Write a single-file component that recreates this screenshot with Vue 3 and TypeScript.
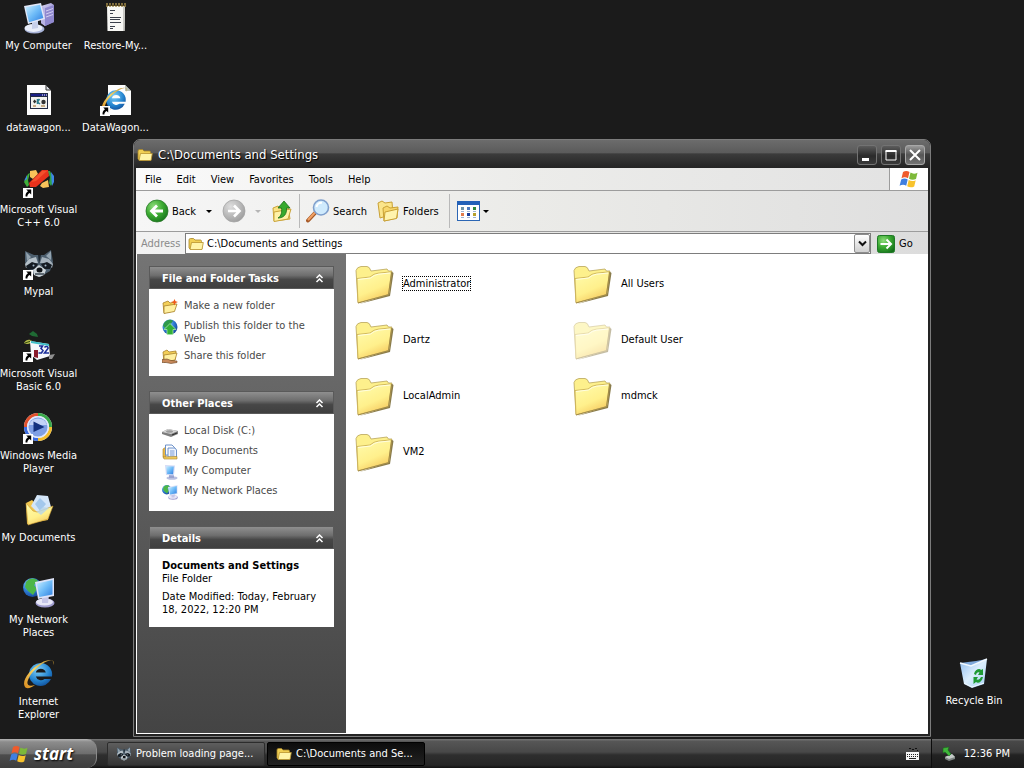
<script setup lang="ts">
import { ref } from 'vue'

interface DesktopItem {
  icon: string
  lines: string[]
  shortcut?: boolean
}

interface TaskLink {
  icon: string
  lines: string[]
}

interface FolderItem {
  name: string
  hidden?: boolean
  focused?: boolean
}

const desktopItems: DesktopItem[] = [
  { icon: 'computer', lines: ['My Computer'] },
  { icon: 'batch', lines: ['datawagon...'] },
  { icon: 'visualc', lines: ['Microsoft Visual', 'C++ 6.0'], shortcut: true },
  { icon: 'raccoon', lines: ['Mypal'], shortcut: true },
  { icon: 'visualbasic', lines: ['Microsoft Visual', 'Basic 6.0'], shortcut: true },
  { icon: 'mediaplayer', lines: ['Windows Media', 'Player'], shortcut: true },
  { icon: 'documents', lines: ['My Documents'] },
  { icon: 'network', lines: ['My Network', 'Places'] },
  { icon: 'explorer', lines: ['Internet', 'Explorer'] },
  { icon: 'notepad', lines: ['Restore-My...'] },
  { icon: 'iepage', lines: ['DataWagon...'], shortcut: true },
]

const menus: string[] = ['File', 'Edit', 'View', 'Favorites', 'Tools', 'Help']

const panels: { title: string; links: TaskLink[] }[] = [
  {
    title: 'File and Folder Tasks',
    links: [
      { icon: 'newfolder', lines: ['Make a new folder'] },
      { icon: 'publish', lines: ['Publish this folder to the', 'Web'] },
      { icon: 'share', lines: ['Share this folder'] },
    ],
  },
  {
    title: 'Other Places',
    links: [
      { icon: 'disk', lines: ['Local Disk (C:)'] },
      { icon: 'docs', lines: ['My Documents'] },
      { icon: 'pc', lines: ['My Computer'] },
      { icon: 'network', lines: ['My Network Places'] },
    ],
  },
]

const folders: FolderItem[] = [
  { name: 'Administrator', focused: true },
  { name: 'All Users' },
  { name: 'Dartz' },
  { name: 'Default User', hidden: true },
  { name: 'LocalAdmin' },
  { name: 'mdmck' },
  { name: 'VM2' },
]

const path = ref('C:\\Documents and Settings')
</script>

<template>
  <div class="desktop">
    <svg class="sprite" aria-hidden="true">
      <defs>
        <linearGradient id="gFolder" x1="0" y1="0" x2="0.5" y2="1">
          <stop offset="0" stop-color="#fffcae" />
          <stop offset="0.65" stop-color="#fff08c" />
          <stop offset="1" stop-color="#f6cc62" />
        </linearGradient>
        <linearGradient id="gScreen" x1="0" y1="0" x2="1" y2="1">
          <stop offset="0" stop-color="#cdf0ff" />
          <stop offset="0.5" stop-color="#6fbcf8" />
          <stop offset="1" stop-color="#2f7fe0" />
        </linearGradient>
        <linearGradient id="gTower" x1="0" y1="0" x2="1" y2="1">
          <stop offset="0" stop-color="#d9d6f4" />
          <stop offset="1" stop-color="#8179c4" />
        </linearGradient>
        <radialGradient id="gGreen" cx="0.35" cy="0.3" r="0.8">
          <stop offset="0" stop-color="#8fdc7c" />
          <stop offset="0.5" stop-color="#3cab32" />
          <stop offset="1" stop-color="#14701a" />
        </radialGradient>
        <radialGradient id="gGray" cx="0.35" cy="0.3" r="0.8">
          <stop offset="0" stop-color="#dedede" />
          <stop offset="1" stop-color="#9a9a9a" />
        </radialGradient>
        <radialGradient id="gGlobe" cx="0.35" cy="0.3" r="0.8">
          <stop offset="0" stop-color="#9fd8ff" />
          <stop offset="0.5" stop-color="#2f7ed6" />
          <stop offset="1" stop-color="#123f92" />
        </radialGradient>
        <radialGradient id="gIe" cx="0.4" cy="0.3" r="0.8">
          <stop offset="0" stop-color="#7fd0f8" />
          <stop offset="0.6" stop-color="#2484cf" />
          <stop offset="1" stop-color="#0d4590" />
        </radialGradient>
        <linearGradient id="gGold" x1="0" y1="1" x2="1" y2="0">
          <stop offset="0" stop-color="#d98a1c" />
          <stop offset="0.5" stop-color="#f8d666" />
          <stop offset="1" stop-color="#b98a2a" />
        </linearGradient>
        <linearGradient id="gBin" x1="0" y1="0" x2="1" y2="1">
          <stop offset="0" stop-color="#8fbcf0" />
          <stop offset="0.5" stop-color="#dbeefd" />
          <stop offset="1" stop-color="#9fcbf0" />
        </linearGradient>
      </defs>

      <symbol id="shortcut" viewBox="0 0 10 10">
        <rect width="10" height="10" fill="#fff" />
        <path d="M3.2 1.5H8.2V6.5L6.6 4.9C4.9 6 4.3 7 4.4 8.6H2.6C2.2 6.3 3.2 4.5 5 3.3Z" fill="#000" />
      </symbol>

      <symbol id="computer" viewBox="0 0 32 32">
        <path d="M18 4L28 1L31 3V20L22 24L18 21Z" fill="url(#gTower)" />
        <path d="M18 4L22 6V24L18 21Z" fill="#b9b4e4" />
        <path d="M22 6L31 3V20L22 24Z" fill="#9089cf" />
        <path d="M23 9L30 6.5M23 12L30 9.500M23 15L30 12.5" stroke="#d3cff2" stroke-width="1" />
        <ellipse cx="11.500" cy="27" rx="10" ry="4.500" fill="#a9b4d8" />
        <ellipse cx="10.500" cy="26" rx="9" ry="3.900" fill="#e9eef9" />
        <path d="M9 20L15 18L15 26L9 27Z" fill="#c7d0ea" />
        <path d="M1 4L18 1L22 17L5 22Z" fill="#e2e8f8" />
        <path d="M2.500 5.200L17 2.700L20.300 16L6 20.200Z" fill="url(#gScreen)" />
      </symbol>

      <symbol id="notepad" viewBox="0 0 32 32">
        <path d="M7 3H25L24.500 29H7.500Z" fill="#f7f7f4" />
        <path d="M24.500 29L25 3L23 4V29Z" fill="#c9c9c4" />
        <path d="M7 1V5M10 1V5M13 1V5M16 1V5M19 1V5M22 1V5M25 1V5" stroke="#a38a4a" stroke-width="1.500" />
        <path d="M7 3.500H25" stroke="#5a4a20" stroke-width="1" />
        <path d="M10 8.500H15M10 11.500H13M10 15.500H21M10 17.500H20M10 20.500H21M10 24.500H15M10 26.500H13" stroke="#3a3f4a" stroke-width="1" />
      </symbol>

      <symbol id="batch" viewBox="0 0 32 32">
        <path d="M4 1H23L28 6V31H4Z" fill="#fdfdfd" />
        <path d="M23 1V6H28Z" fill="#d9dce2" stroke="#333" stroke-width="1" />
        <rect x="7" y="9" width="18" height="16" fill="#222a44" />
        <rect x="8" y="13" width="16" height="11" fill="#f2f2ee" />
        <rect x="8" y="10" width="16" height="2" fill="#1a1f86" />
        <path d="M19 11H20M21 11H22M23 11H24" stroke="#fff" />
        <path d="M11.500 15.500L13.500 17.500L11.500 19.500L10 17.500Z" fill="#333" />
        <path d="M14.500 15V20M16.500 15L14.500 18L17 20" stroke="#2a7a8a" stroke-width="1.500" fill="none" />
        <circle cx="20.500" cy="18" r="2.200" fill="#333" />
        <path d="M10 22H13M18 22H22" stroke="#a06a20" />
      </symbol>

      <symbol id="visualc" viewBox="0 0 32 32">
        <path d="M1 16L5 8L7 7L5 14L6 19L4 21Z" fill="#3fae3a" />
        <path d="M1 15L4 9V13Z" fill="#3f86e8" />
        <path d="M31 14L27 5L24 5L27 11L26 17L28 20Z" fill="#2fa04a" />
        <path d="M28 6L31 10V16L29 20Z" fill="#3f86e8" />
        <path d="M7 5L13 4L15 8L10 13L7 11Z" fill="#f8c25a" />
        <path d="M19 17L25 14L26 21L20 22L17 20Z" fill="#f8c25a" />
        <path d="M6 17L19 4L25 4L26 10L13 21L7 21Z" fill="#e8321c" />
        <path d="M8 16L19 5L24 5L13 15Z" fill="#f4502c" />
      </symbol>

      <symbol id="raccoon" viewBox="0 0 32 32">
        <path d="M2 3L11 7H21L28 2L30 14L27 23L17 29L6 24L2 14Z" fill="#4d5f6e" />
        <path d="M3 4L8 9L4 13ZM28 3L23 8L28 12Z" fill="#93a3af" />
        <path d="M6 11L13 9L15 15L9 15L3 20L2 16Z" fill="#b4c0c8" />
        <path d="M26 11L19 9L17 15L24 15L29 20L30 16Z" fill="#a3b0ba" />
        <path d="M3 18L9 14L15 16L12 21L5 22Z" fill="#141b22" />
        <path d="M29 17L24 14L18 16L21 21L27 21Z" fill="#141b22" />
        <path d="M15 7L16 16L18 7Z" fill="#1d2730" />
        <path d="M10 22L16 17L23 22L21 27L16 29L11 27Z" fill="#cdd5d9" />
        <ellipse cx="16.500" cy="22" rx="3" ry="2.500" fill="#0d1115" />
        <path d="M12 26H21" stroke="#3a4650" stroke-width="1.500" />
        <circle cx="10.500" cy="17.500" r="1" fill="#9fb4c4" />
        <circle cx="22.500" cy="17.500" r="1" fill="#9fb4c4" />
      </symbol>

      <symbol id="visualbasic" viewBox="0 0 32 32">
        <path d="M6 4L10 1L14 4L15 7L9 6Z" fill="#1f6a34" />
        <path d="M1 13C3 9 7 9 9 11C8 14 4 15 1 13Z" fill="#b4bd4a" />
        <path d="M2 13L8 11" stroke="#3a4a10" />
        <path d="M7 11L26 14L27 26L14 30L8 25Z" fill="#f6f8fb" />
        <path d="M8 11L26 14V16L8 13Z" fill="#3fbfc8" />
        <path d="M11 20H15V28L11 27Z" fill="#8a1c2c" />
        <path d="M16 16H19.500L18 18.500L20 20.500L18.500 23H15.500M21.500 17.500C22 16 25.500 16 25 18.500L21.500 23H26" fill="none" stroke="#1c2f9a" stroke-width="1.600" />
        <path d="M26 25L32 24L29 29L26 29Z" fill="#8e8e8e" />
      </symbol>

      <symbol id="mediaplayer" viewBox="0 0 32 32">
        <circle cx="15" cy="15" r="14" fill="#e9edf8" />
        <path d="M15 2.500A12.500 12.500 0 0 1 27.500 15" fill="none" stroke="#39a84a" stroke-width="3" />
        <path d="M27.500 15A12.500 12.500 0 0 1 15 27.500" fill="none" stroke="#f3bd2c" stroke-width="3" />
        <path d="M15 27.500A12.500 12.500 0 0 1 2.500 15" fill="none" stroke="#3a6be0" stroke-width="3" />
        <path d="M2.500 15A12.500 12.500 0 0 1 15 2.500" fill="none" stroke="#e0502c" stroke-width="3" />
        <circle cx="15" cy="15" r="11" fill="#dfe7fb" />
        <circle cx="15" cy="15" r="9.500" fill="#7f9fe4" />
        <path d="M6 13A9.500 9.500 0 0 1 24 13Z" fill="#c3d3f7" />
        <path d="M10.500 9.500L21.500 15L10.500 20Z" fill="#14317e" />
      </symbol>

      <symbol id="documents" viewBox="0 0 32 32">
        <path d="M3 9L9 6L12 9L27 11L25 26L4 30Z" fill="#f2c64e" />
        <path d="M8 12L14 1L25 2L28 13L18 22Z" fill="#d4e6f9" />
        <path d="M12 10L17 4L23 10L17 17Z" fill="#a3c8ec" />
        <path d="M3 9L10 17L14 18L20 16L30 12L25 25L5 31Z" fill="url(#gFolder)" stroke="#c99b32" stroke-width="0.600" />
        <path d="M14 18L20 13L26 14L18 21Z" fill="#b7d4e8" opacity="0.8" />
      </symbol>

      <symbol id="network" viewBox="0 0 32 32">
        <circle cx="9.500" cy="11.500" r="9.500" fill="url(#gGlobe)" />
        <path d="M3 6C7 1 13 2 15 5L11 9L14 13L10 19L5 15L2 11Z" fill="#4cb648" />
        <ellipse cx="22" cy="27" rx="9.500" ry="4.500" fill="#9f9ccf" />
        <ellipse cx="21.500" cy="26" rx="8.500" ry="3.500" fill="#e8e8f8" />
        <path d="M19 20L26 19L25 27L19 27Z" fill="#c5c6e8" />
        <path d="M12 6L31 2V20L15 23Z" fill="#dde3f8" />
        <path d="M13.800 7.500L29.500 4V18.500L16.300 21Z" fill="url(#gScreen)" />
      </symbol>

      <symbol id="explorer" viewBox="0 0 32 32">
        <path d="M18 5A11.500 11.500 0 1 0 28 21H21.500A5.500 5.500 0 0 1 12.800 18.500H29A11.500 11.500 0 0 0 18 5ZM12.800 14.500A5.200 5.200 0 0 1 22.800 14.500Z" fill="url(#gIe)" fill-rule="evenodd" />
        <path d="M30 7C33 2 27 0 18 5C7 11 -1 22 1.500 28C3 32 8 30 12 27C6 29 3 27 5 22C8 14 17 6 25 3C29 1.500 31 2.500 30 7Z" fill="url(#gGold)" />
      </symbol>

      <symbol id="iepage" viewBox="0 0 32 32">
        <path d="M8 1H25L31 7V31H8Z" fill="#fdfdfd" />
        <path d="M25 1V7H31Z" fill="#b9c2b8" />
        <g transform="translate(1 2) scale(0.85)">
          <use href="#explorer" width="32" height="32" />
        </g>
      </symbol>

      <symbol id="bin" viewBox="0 0 32 32">
        <path d="M2 6L13 9L29 2L26 27L14 31L6 27Z" fill="url(#gBin)" />
        <path d="M2 6L13 9L29 2L18 4Z" fill="#7fa9dc" />
        <path d="M2 6L13 9L29 2" fill="none" stroke="#f2f9ff" stroke-width="1.500" />
        <path d="M6 26L14 30L26 26" fill="none" stroke="#eef7ff" stroke-width="1" />
        <path d="M16 17C17 12 22 11 23 13L25 12V18L20 18L21.500 15.500C19.500 15 18.500 16 18 18Z" fill="#1f9a34" />
        <path d="M25 20C24 25 20 27 18 25L15.500 27V20H20L18.500 22.500C21 23 22 22 23 20Z" fill="#1f9a34" />
      </symbol>

      <symbol id="folder48" viewBox="0 0 48 48">
        <path d="M9 45L40 37L43.500 14L41 12L39 35Z" fill="#8a7c4c" />
        <path d="M6 11.500Q7 8 11 7.500H17Q19.500 7.500 21 12L37 10L38.500 12L42 12L41 14L39 34L8 43.500Z" fill="#fdf08c" stroke="#b9a55a" stroke-width="0.800" />
        <path d="M7 19.500L20 18Q24 14.500 28 14.200L41.500 12.800L38.500 35.500L8 43.800Z" fill="url(#gFolder)" stroke="#c7ab50" stroke-width="0.800" />
        <path d="M8 20.500L20.500 19Q24.500 15.600 28.500 15.200L40 14" fill="none" stroke="#fffee0" stroke-width="1" />
        <path d="M8 44L38.500 35.700L41.700 13" fill="none" stroke="#a08a48" stroke-width="1" />
      </symbol>

      <symbol id="folder16" viewBox="0 0 16 16">
        <path d="M1 4Q1 2.500 2.500 2.500H5.500L7 4H12.500Q13.500 4 13.500 5.500V6L14 13H2L1 12Z" fill="#f0cf54" stroke="#a8862a" stroke-width="0.800" />
        <path d="M3.500 6.500H15.300L14 13.500H2Z" fill="#fff4a8" stroke="#b8932e" stroke-width="0.800" />
      </symbol>

      <symbol id="folders" viewBox="0 0 24 24">
        <path d="M2 4L6 2L9 4L16 3L17 15L4 19Z" fill="#fbe58a" stroke="#c9a136" />
        <path d="M7 9L11 7L14 9L22 8L21 19L8 22Z" fill="#f7d76c" stroke="#c9a136" />
        <path d="M9 13L22 10L20.500 19.500L8 22Z" fill="#fff3ae" stroke="#c9a136" />
      </symbol>

      <symbol id="newfolder" viewBox="0 0 16 16">
        <path d="M1 4L6 2L8 4L13 3L12 12L2 14Z" fill="#f3cf58" stroke="#a8822a" stroke-width="0.800" />
        <path d="M2 7L15 5L12.500 12.500L2 14.500Z" fill="#fff0a0" stroke="#a8822a" stroke-width="0.800" />
        <path d="M12.500 0L13.500 2.200L16 3L13.500 4L12.500 6.500L11.500 4L9 3L11.500 2.200Z" fill="#ef5a1c" />
      </symbol>

      <symbol id="publish" viewBox="0 0 16 16">
        <circle cx="8" cy="8" r="7.500" fill="url(#gGlobe)" />
        <path d="M2 4C5 0 9 0 11 2L8 6L3 9L1 7Z" fill="#2f9a4a" />
        <path d="M8 4.500L14 10.500H11V15.500H5V10.500H2Z" fill="#33b038" stroke="#b7efb0" stroke-width="0.700" />
      </symbol>

      <symbol id="share" viewBox="0 0 16 16">
        <path d="M1 3L5 1L7 3L14 2L13 11L2 13Z" fill="#f3cf58" stroke="#a8822a" stroke-width="0.800" />
        <path d="M2 6L15 4L13 11L2 13Z" fill="#fff0a0" stroke="#a8822a" stroke-width="0.800" />
        <path d="M0 10.500L5 10L9 11.500L15 12V13.500L9 14.500L4 13.500L0 13.500Z" fill="#c98a5c" stroke="#6a4324" stroke-width="0.600" />
      </symbol>

      <symbol id="disk" viewBox="0 0 16 16">
        <path d="M0 8L6 5L16 7V10L9 13L0 10Z" fill="#7d7d7d" />
        <path d="M0 8L6 5L16 7L9 10Z" fill="#d5d5d5" />
        <ellipse cx="7.500" cy="7.500" rx="3.500" ry="1.300" fill="#9d9d9d" />
        <path d="M10 11L15 9" stroke="#2b2b2b" />
      </symbol>

      <symbol id="docs" viewBox="0 0 16 16">
        <path d="M1 5L4 3V14L1 13Z" fill="#e9b84a" stroke="#a8822a" stroke-width="0.600" />
        <path d="M3.500 1H10L12.500 3.500V11H3.500Z" fill="#fff" stroke="#5d87c4" stroke-width="0.900" />
        <path d="M6 4H13L14.500 6V13H6Z" fill="#f1f6ff" stroke="#5d87c4" stroke-width="0.900" />
        <path d="M8 7H12.500M8 9H12.500M8 11H12.500" stroke="#6a8fd0" stroke-width="0.900" />
        <path d="M1 13L15 12.500V15H2Z" fill="#f4cf60" stroke="#a8822a" stroke-width="0.600" />
      </symbol>

      <symbol id="pc" viewBox="0 0 16 16">
        <ellipse cx="10" cy="14" rx="5.500" ry="1.800" fill="#b9bfe0" />
        <path d="M7 10H12V14H7Z" fill="#9aa4d0" />
        <path d="M3 1L13 1.500L12 11.500L4 11Z" fill="#d4dbf6" />
        <path d="M4.200 2.200L11.800 2.600L11 10.200L5 9.900Z" fill="url(#gScreen)" />
      </symbol>

      <symbol id="flag" viewBox="0 0 20 18">
        <path d="M4 2C6 0.500 8.500 0.500 10.500 2L9 8.300C7 7 4.600 7 2.500 8.300Z" fill="#ef5b2c" />
        <path d="M11.500 2.500C13.700 4 16 4 18.500 2.700L17 9C14.700 10.200 12.300 10 10 8.800Z" fill="#7db93a" />
        <path d="M2.200 9.400C4.400 8.200 6.700 8.200 8.700 9.500L7.200 15.700C5.200 14.500 2.900 14.500 0.600 15.700Z" fill="#3f7fe0" />
        <path d="M9.700 10C12 11.300 14.300 11.400 16.700 10.200L15.200 16.400C12.800 17.600 10.400 17.500 8.200 16.200Z" fill="#f8c32c" />
      </symbol>

      <symbol id="back" viewBox="0 0 24 24">
        <circle cx="12" cy="12" r="11" fill="url(#gGreen)" stroke="#2a7a2a" stroke-width="0.800" />
        <path d="M18 12H7M12 6.500L6.500 12L12 17.500" fill="none" stroke="#fff" stroke-width="2.800" />
      </symbol>

      <symbol id="forward" viewBox="0 0 24 24">
        <circle cx="12" cy="12" r="11" fill="url(#gGray)" stroke="#a5a5a5" stroke-width="0.800" />
        <path d="M6 12H17M12 6.500L17.500 12L12 17.500" fill="none" stroke="#fff" stroke-width="2.600" />
      </symbol>

      <symbol id="up" viewBox="0 0 24 24">
        <path d="M3 9L8 7L10 9L18 8L20 20L4 22Z" fill="#fbe383" stroke="#caa43a" />
        <path d="M4 13L21 10L18 20L4 22.500Z" fill="#fff2a8" stroke="#caa43a" />
        <path d="M14 2L20 9H16.500C17 15 14 19 8 19C11.500 17 12 13 11.500 9H8Z" fill="#37a92e" stroke="#1c6f1a" stroke-width="0.800" />
      </symbol>

      <symbol id="search" viewBox="0 0 24 24">
        <path d="M9 14L2 21.500" stroke="#a65a28" stroke-width="4" stroke-linecap="round" />
        <path d="M9 13.500L2.500 20.500" stroke="#f0a064" stroke-width="2" stroke-linecap="round" />
        <circle cx="15" cy="8.500" r="7.500" fill="#cfeafc" stroke="#7f9fcc" stroke-width="1.600" />
        <path d="M10.500 8A5 5 0 0 1 16 3.800" fill="none" stroke="#fff" stroke-width="2" />
      </symbol>

      <symbol id="views" viewBox="0 0 23 20">
        <rect x="0.500" y="0.500" width="22" height="19" fill="#fff" stroke="#2c66b4" />
        <rect x="0" y="0" width="23" height="4" fill="#2361b8" />
        <rect x="4" y="6" width="3" height="3" fill="#6d93a8" />
        <rect x="10" y="6" width="3" height="3" fill="#4b7ac0" />
        <rect x="16" y="6" width="3" height="3" fill="#2f8a3c" />
        <rect x="4" y="12" width="3" height="3" fill="#e07a4a" />
        <rect x="10" y="12" width="3" height="3" fill="#1a3f9c" />
        <rect x="16" y="12" width="3" height="3" fill="#b6a02a" />
        <path d="M4 10.500H7M10 10.500H13M16 10.500H19M4 16.500H7M10 16.500H13M16 16.500H19" stroke="#9fb4d0" />
      </symbol>

      <symbol id="go" viewBox="0 0 18 18">
        <rect x="0.500" y="0.500" width="17" height="17" rx="2" fill="url(#gGreen)" stroke="#1f7a26" />
        <path d="M3.500 9H14M9.500 4.500L14 9L9.500 13.500" fill="none" stroke="#fff" stroke-width="2" />
      </symbol>

      <symbol id="keyboard" viewBox="0 0 13 13">
        <path d="M3 1.500H5M6 2.500H8M9 1.500H11M11 3.500H12" stroke="#111" />
        <rect x="0" y="5" width="13" height="8" fill="#f4f4f4" />
        <path d="M1 7.500H12M1 9.500H12" stroke="#222" stroke-dasharray="1 1" />
        <path d="M3 11.500H10" stroke="#222" />
      </symbol>

      <symbol id="eject" viewBox="0 0 16 16">
        <path d="M4 11L11 8L14 11V13L8 15L4 13Z" fill="#7d8482" />
        <path d="M4 11L11 8L14 11L8 13Z" fill="#c5cbc8" />
        <path d="M2 2L8 1L7 4L10 8L8 10L4 6L2 7Z" fill="#3fb53a" stroke="#1a6a1c" stroke-width="0.600" />
      </symbol>
    </svg>

    <main class="workspace">
      <nav class="icons" aria-label="Desktop">
        <button v-for="item in desktopItems" :key="item.lines.join(' ')" class="shortcut" type="button">
          <span class="picture">
            <svg class="i32"><use :href="'#' + item.icon" /></svg>
            <svg v-if="item.shortcut" class="arrow"><use href="#shortcut" /></svg>
          </span>
          <span v-for="line in item.lines" :key="line" class="line">{{ line }}</span>
        </button>
      </nav>

      <button class="shortcut bin" type="button">
        <span class="picture"><svg class="i32"><use href="#bin" /></svg></span>
        <span class="line">Recycle Bin</span>
      </button>

      <section class="window">
        <header class="titlebar">
          <svg class="i16"><use href="#folder16" /></svg>
          <h1>C:\Documents and Settings</h1>
          <button class="ctl" type="button" aria-label="Minimize">
            <svg viewBox="0 0 18 18"><rect x="4" y="12" width="7" height="3" fill="#fff" /></svg>
          </button>
          <button class="ctl" type="button" aria-label="Maximize">
            <svg viewBox="0 0 18 18"><path d="M4 5H14V14H4Z" fill="none" stroke="#fff" /><path d="M3.500 5H14.500" stroke="#fff" stroke-width="2" /></svg>
          </button>
          <button class="ctl close" type="button" aria-label="Close">
            <svg viewBox="0 0 18 18"><path d="M4 4L14 14M14 4L4 14" stroke="#fff" stroke-width="2" /></svg>
          </button>
        </header>

        <nav class="menubar" aria-label="Menu">
          <button v-for="m in menus" :key="m" type="button">{{ m }}</button>
          <span class="brand"><svg><use href="#flag" /></svg></span>
        </nav>

        <div class="toolbar">
          <button type="button"><svg class="i24"><use href="#back" /></svg>Back</button>
          <button type="button" class="drop" aria-label="Back history"><i class="caret"></i></button>
          <button type="button" aria-label="Forward"><svg class="i24"><use href="#forward" /></svg></button>
          <button type="button" class="drop narrow" aria-label="Forward history"><i class="caret dim"></i></button>
          <button type="button" aria-label="Up"><svg class="i24"><use href="#up" /></svg></button>
          <span class="rule"></span>
          <button type="button"><svg class="i24"><use href="#search" /></svg>Search</button>
          <button type="button" class="fold"><svg class="i24"><use href="#folders" /></svg>Folders</button>
          <span class="rule wide"></span>
          <button type="button" class="views" aria-label="Views"><svg><use href="#views" /></svg><i class="caret"></i></button>
        </div>

        <form class="addressbar" @submit.prevent>
          <label for="address">Address</label>
          <div class="combo">
            <svg class="i16"><use href="#folder16" /></svg>
            <input id="address" v-model="path" type="text" spellcheck="false" />
            <button type="button" class="open" aria-label="Show addresses">
              <svg viewBox="0 0 9 7"><path d="M1 1.500L4.500 5L8 1.500" fill="none" stroke="#111" stroke-width="2" /></svg>
            </button>
          </div>
          <button type="submit" class="go"><svg><use href="#go" /></svg>Go</button>
        </form>

        <div class="content">
          <aside class="sidebar">
            <section v-for="p in panels" :key="p.title" class="panel">
              <h2>
                <span>{{ p.title }}</span>
                <button type="button" :aria-label="'Collapse ' + p.title">
                  <svg viewBox="0 0 9 9"><path d="M1.500 4L4.500 1L7.500 4M1.500 8L4.500 5L7.500 8" /></svg>
                </button>
              </h2>
              <ul>
                <li v-for="l in p.links" :key="l.lines[0]">
                  <svg class="i16"><use :href="'#' + l.icon" /></svg>
                  <a href="#"><span v-for="t in l.lines" :key="t" class="line">{{ t }}</span></a>
                </li>
              </ul>
            </section>
            <section class="panel">
              <h2>
                <span>Details</span>
                <button type="button" aria-label="Collapse Details">
                  <svg viewBox="0 0 9 9"><path d="M1.500 4L4.500 1L7.500 4M1.500 8L4.500 5L7.500 8" /></svg>
                </button>
              </h2>
              <div class="details">
                <strong>Documents and Settings</strong>
                <p>File Folder</p>
                <p class="date">Date Modified: Today, February<br />18, 2022, 12:20 PM</p>
              </div>
            </section>
          </aside>

          <div class="files">
            <button v-for="f in folders" :key="f.name" type="button" :class="{ hidden: f.hidden }">
              <svg class="i48"><use href="#folder48" /></svg>
              <span :class="{ focused: f.focused }">{{ f.name }}</span>
            </button>
          </div>
        </div>
      </section>
    </main>

    <footer class="taskbar">
      <button class="start" type="button"><svg><use href="#flag" /></svg>start</button>
      <button class="task" type="button"><svg class="i16"><use href="#raccoon" /></svg>Problem loading page...</button>
      <button class="task active" type="button"><svg class="i16"><use href="#folder16" /></svg>C:\Documents and Se...</button>
      <svg class="keys"><use href="#keyboard" /></svg>
      <div class="tray">
        <svg class="i16"><use href="#eject" /></svg>
        <time>12:36 PM</time>
      </div>
    </footer>
  </div>
</template>

<style>
body {
  margin: 0;
  background: #1b1b1b;
}
</style>

<style scoped>
.desktop {
  display: flex;
  flex-direction: column;
  height: 100vh;
  overflow: hidden;
  background: #1b1b1b;
  font: 11px/13px Tahoma, 'DejaVu Sans Condensed', 'DejaVu Sans', sans-serif;
  color: #000;
}
.sprite {
  position: absolute;
  width: 0;
  height: 0;
}
button {
  padding: 0;
  border: 0;
  background: none;
  font: inherit;
  color: inherit;
  white-space: nowrap;
}
svg {
  flex: none;
  display: block;
}
.line {
  display: block;
}
.i16 { width: 16px; height: 16px; }
.i24 { width: 24px; height: 24px; }
.i32 { width: 32px; height: 32px; }
.i48 { width: 48px; height: 48px; }

.workspace {
  position: relative;
  flex: 1;
  min-height: 0;
}
.icons {
  display: grid;
  grid-auto-flow: column;
  grid-template-rows: repeat(9, 82px);
  grid-auto-columns: 77px;
}
.shortcut {
  display: flex;
  flex-direction: column;
  align-items: center;
  justify-content: flex-start;
  padding-top: 2px;
  color: #fff;
}
.picture {
  position: relative;
  margin-bottom: 5px;
}
.arrow {
  position: absolute;
  left: 0;
  bottom: 0;
  width: 10px;
  height: 10px;
}
.bin {
  position: absolute;
  right: 12px;
  bottom: 30px;
  width: 76px;
  height: 54px;
}

.window {
  position: absolute;
  left: 133px;
  right: 93px;
  top: 139px;
  bottom: 2px;
  display: flex;
  flex-direction: column;
  box-sizing: border-box;
  border: 1px solid #7c7c7c;
  border-radius: 7px 7px 0 0;
  padding: 0 2px 2px;
  background: #242424;
  overflow: hidden;
}
.titlebar {
  display: flex;
  align-items: center;
  gap: 5px;
  height: 28px;
  box-sizing: border-box;
  margin: 0 -2px;
  padding: 2px 5px 0 3px;
  background: linear-gradient(#6c6c6c, #5b5b5b 45%, #3b3b3b 50%, #242424);
}
.titlebar h1 {
  flex: 1;
  margin: 0;
  font-size: 13px;
  line-height: 16px;
  font-weight: 400;
  color: #fff;
  text-shadow: 1px 1px 1px #000;
}
.ctl {
  width: 20px;
  height: 20px;
  box-sizing: border-box;
  border: 1px solid #737373;
  border-radius: 3px;
  background: linear-gradient(#5c5c5c, #2a2a2a 55%, #3a3a3a);
}
.ctl + .ctl {
  margin-left: -1px;
}
.ctl svg {
  width: 18px;
  height: 18px;
}
.close {
  border-color: #a8a8a8;
  background: linear-gradient(#9a9a9a, #555 50%, #747474);
}

.menubar {
  display: flex;
  height: 22px;
  border-bottom: 1px solid #9c9c9c;
  background: linear-gradient(90deg, #fafafa, #ececea 50%, #e2e2e2);
}
.menubar button {
  padding: 0 7px;
}
.menubar button:first-child {
  margin-left: 2px;
}
.menubar button + button {
  margin-left: 1px;
}
.brand {
  display: flex;
  align-items: center;
  justify-content: center;
  width: 38px;
  margin-left: auto;
  border-left: 1px solid #9c9c9c;
  background: #fff;
}
.brand svg {
  width: 20px;
  height: 18px;
}

.toolbar {
  display: flex;
  align-items: center;
  height: 40px;
  padding-left: 9px;
  border-bottom: 1px solid #9c9c9c;
  background: linear-gradient(90deg, #f6f6f6, #ebebe8 50%, #dfdfdf);
}
.toolbar button {
  display: flex;
  align-items: center;
  gap: 3px;
}
.toolbar .drop {
  width: 26px;
  justify-content: center;
}
.toolbar .narrow {
  width: 24px;
}
.toolbar .fold {
  margin-left: 9px;
}
.views svg {
  width: 23px;
  height: 20px;
}
.rule {
  width: 1px;
  height: 34px;
  margin: 0 6px 0 5px;
  background: #b9b9b9;
}
.wide {
  margin: 0 7px 0 10px;
}
.caret {
  border: 3px solid transparent;
  border-top-color: #000;
  border-bottom: 0;
}
.dim {
  border-top-color: #b5b5b5;
}

.addressbar {
  display: flex;
  align-items: flex-end;
  height: 22px;
  padding-left: 5px;
  background: linear-gradient(90deg, #f2f2f2, #e9e9e7 50%, #dcdcdc);
}
.addressbar label {
  width: 44px;
  line-height: 21px;
  color: #8a8a8a;
}
.combo {
  flex: 1;
  display: flex;
  align-items: center;
  height: 21px;
  box-sizing: border-box;
  border: 1px solid #7d7d7d;
  padding-left: 2px;
  background: #fff;
}
.combo input {
  flex: 1;
  min-width: 0;
  padding: 0 0 0 3px;
  border: 0;
  outline: 0;
  background: none;
  font: inherit;
}
.open {
  display: flex;
  align-items: center;
  justify-content: center;
  width: 16px;
  height: 19px;
  box-sizing: border-box;
  border: 1px solid #8d8d8d;
  border-radius: 2px;
  background: linear-gradient(#fff, #d0d0d0);
}
.open svg {
  width: 9px;
  height: 7px;
}
.go {
  display: flex;
  align-items: center;
  gap: 4px;
  width: 51px;
  height: 21px;
  margin-left: 6px;
}
.go svg {
  width: 18px;
  height: 18px;
}

.content {
  flex: 1;
  display: flex;
  min-height: 0;
  border: 1px solid #fff;
  border-top: 0;
  border-right: 0;
  background: #fff;
}
.sidebar {
  display: flex;
  flex-direction: column;
  gap: 15px;
  width: 209px;
  box-sizing: border-box;
  padding: 12px 12px 0;
  background: linear-gradient(#747474, #444);
}
.panel {
  background: #fff;
}
.panel h2 {
  display: flex;
  align-items: center;
  justify-content: space-between;
  height: 23px;
  box-sizing: border-box;
  margin: 0;
  padding: 2px 9px 0 12px;
  border: 1px solid #5a5a5a;
  font-size: 11px;
  line-height: 13px;
  font-weight: 700;
  color: #fff;
  background: linear-gradient(#8f8f8f, #6e6e6e 40%, #474747 60%, #3f3f3f);
}
.panel h2 svg {
  width: 9px;
  height: 9px;
  fill: none;
  stroke: #fff;
  stroke-width: 1.5;
}
.panel ul {
  display: flex;
  flex-direction: column;
  gap: 4px;
  margin: 0;
  padding: 10px 10px 11px 13px;
  list-style: none;
}
.panel li {
  display: flex;
  gap: 6px;
}
.panel a {
  color: #4a4a4a;
  text-decoration: none;
  white-space: nowrap;
}
.details {
  padding: 10px 0 11px 13px;
  white-space: nowrap;
}
.details strong {
  display: block;
}
.details p {
  margin: 0;
}
.details .date {
  margin-top: 5px;
}
.files {
  flex: 1;
  display: grid;
  grid-template-columns: repeat(auto-fill, 218px);
  grid-auto-rows: 56px;
  align-content: start;
  padding: 1px 0 0 4px;
}
.files button {
  display: flex;
  align-items: center;
  gap: 4px;
}
.files span {
  border: 1px dotted transparent;
}
.files .focused {
  border-color: #000;
}
.files .hidden svg {
  opacity: 0.5;
}

.taskbar {
  display: flex;
  align-items: center;
  height: 29px;
  background: linear-gradient(#7a7a7a, #565656 8%, #484848 45%, #2e2e2e 55%, #262626 90%, #111);
  color: #fff;
}
.start {
  display: flex;
  align-items: center;
  gap: 5px;
  width: 97px;
  height: 29px;
  margin-right: 10px;
  padding-left: 9px;
  border-right: 1px solid #8a8a8a;
  border-radius: 0 10px 10px 0;
  background: linear-gradient(#b4b4b4, #8c8c8c 10%, #6e6e6e 50%, #4c4c4c 55%, #3d3d3d);
  font: italic bold 17px/20px 'Open Sans', 'Noto Sans', sans-serif;
  text-shadow: 1px 1px 2px #000;
}
.start svg {
  width: 20px;
  height: 18px;
}
.task {
  display: flex;
  align-items: center;
  gap: 4px;
  width: 158px;
  height: 24px;
  box-sizing: border-box;
  margin-right: 2px;
  padding: 0 8px;
  border: 1px solid #2c2c2c;
  border-radius: 2px;
  background: linear-gradient(#5e5e5e, #484848 50%, #343434);
}
.active {
  border-color: #000;
  background: linear-gradient(#0c0c0c, #222);
}
.keys {
  width: 13px;
  height: 13px;
  margin: 0 12px 0 auto;
}
.tray {
  display: flex;
  align-items: center;
  gap: 7px;
  height: 29px;
  padding: 0 14px 0 9px;
  border-left: 1px solid #0c0c0c;
  background: linear-gradient(#707070, #484848 8%, #3c3c3c 45%, #222 55%, #1a1a1a);
}
</style>
